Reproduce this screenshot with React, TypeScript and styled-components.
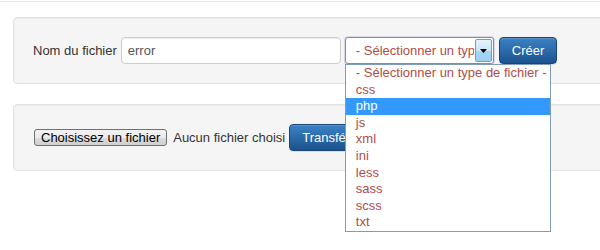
import React from "react";
import styled, { createGlobalStyle } from "styled-components";

const GlobalStyle = createGlobalStyle`
  html {
    overflow: hidden;
  }
  body {
    margin: 0;
    padding: 0;
    min-height: 250px;
    background: #ffffff;
    font-family: "Liberation Sans", Arial, sans-serif;
    font-size: 13px;
    color: #333333;
  }
`;

const TopRule = styled.div`
  margin-top: 1px;
  height: 1px;
  background: #e6e6e6;
`;

const Page = styled.div`
  padding: 15px 0 0 13px;
`;

const Well = styled.div`
  box-sizing: border-box;
  width: 640px;
  padding: 19px;
  margin-bottom: 20px;
  background: #f5f5f5;
  border: 1px solid #e3e3e3;
  border-radius: 4px;
  box-shadow: inset 0 1px 1px rgba(0, 0, 0, 0.05);
`;

const Row = styled.div`
  display: flex;
  align-items: center;
  height: 27px;
`;

const Label = styled.label`
  margin-right: 4px;
  color: #333333;
`;

const TextInput = styled.input`
  box-sizing: border-box;
  width: 220px;
  height: 27px;
  margin: 0 4px 0 0;
  padding: 0 6px;
  font-family: "Liberation Sans", Arial, sans-serif;
  font-size: 13px;
  color: #555555;
  background: #ffffff;
  border: 1px solid #cccccc;
  border-radius: 4px;
  box-shadow: inset 0 1px 1px rgba(0, 0, 0, 0.075);
  outline: none;
`;

const SelectWrap = styled.div`
  position: relative;
  width: 149px;
  height: 27px;
  margin-right: 5px;
`;

const SelectBox = styled.div`
  box-sizing: border-box;
  display: flex;
  height: 27px;
  background: #ffffff;
  border: 1px solid #8883c6;
  border-radius: 3px;
  box-shadow: 0 0 0 1px rgba(136, 131, 198, 0.25);
  overflow: hidden;
`;

const SelectText = styled.div`
  flex: 1;
  min-width: 0;
  padding-left: 10px;
  line-height: 25px;
  color: #b04c4a;
  white-space: nowrap;
  overflow: hidden;
`;

const ArrowButton = styled.div`
  box-sizing: border-box;
  flex: none;
  width: 17px;
  margin: 1px;
  display: flex;
  align-items: center;
  justify-content: center;
  background: linear-gradient(#e6f4fc, #c9e6f9 50%, #a9d6f4 51%, #9cd0f2);
  border: 1px solid #6f9dc6;
  border-radius: 2px;
`;

const Dropdown = styled.div`
  position: absolute;
  top: 27px;
  left: 0;
  z-index: 10;
  box-sizing: border-box;
  width: 206px;
  background: #ffffff;
  border: 1px solid #7f9db9;
`;

const OptionItem = styled.div<{ $active?: boolean }>`
  height: 16.6px;
  line-height: 16.6px;
  padding-left: 10px;
  white-space: nowrap;
  color: ${(p) => (p.$active ? "#ffffff" : "#b04c4a")};
  background: ${(p) => (p.$active ? "#3399ff" : "transparent")};
`;

const PrimaryButton = styled.button`
  box-sizing: border-box;
  height: 27px;
  padding: 0 12px;
  font-family: "Liberation Sans", Arial, sans-serif;
  font-size: 13px;
  color: #ffffff;
  background: linear-gradient(#3b82c4, #1b538f);
  border: 1px solid #1a4576;
  border-radius: 4px;
  box-shadow: inset 0 1px 0 rgba(255, 255, 255, 0.15), 0 1px 1px rgba(0, 0, 0, 0.1);
  white-space: nowrap;
`;

const FileButton = styled.button`
  box-sizing: border-box;
  height: 17px;
  margin-left: 1px;
  padding: 0 6px;
  font-family: "Liberation Sans", Arial, sans-serif;
  font-size: 13px;
  line-height: 15px;
  color: #000000;
  background: linear-gradient(#f3f3f3, #ebebeb 50%, #dddddd 51%, #cfcfcf);
  border: 1px solid #707070;
  border-radius: 3px;
`;

const FileStatus = styled.span`
  margin: 0 4px 0 6px;
  color: #333333;
`;

const options = [
  "- Sélectionner un type de fichier -",
  "css",
  "php",
  "js",
  "xml",
  "ini",
  "less",
  "sass",
  "scss",
  "txt",
];

export default function App() {
  return (
    <>
      <GlobalStyle />
      <TopRule />
      <Page>
        <Well>
          <Row>
            <Label>Nom du fichier</Label>
            <TextInput defaultValue="error" />
            <SelectWrap>
              <SelectBox>
                <SelectText>- Sélectionner un type de fichier -</SelectText>
                <ArrowButton>
                  <svg width="7" height="4" viewBox="0 0 7 4">
                    <path d="M0 0 H7 L3.5 4 Z" fill="#000" />
                  </svg>
                </ArrowButton>
              </SelectBox>
              <Dropdown>
                {options.map((o) => (
                  <OptionItem key={o} $active={o === "php"}>
                    {o}
                  </OptionItem>
                ))}
              </Dropdown>
            </SelectWrap>
            <PrimaryButton>Créer</PrimaryButton>
          </Row>
        </Well>
        <Well>
          <Row>
            <FileButton>Choisissez un fichier</FileButton>
            <FileStatus>Aucun fichier choisi</FileStatus>
            <PrimaryButton>Transférer</PrimaryButton>
          </Row>
        </Well>
      </Page>
    </>
  );
}
